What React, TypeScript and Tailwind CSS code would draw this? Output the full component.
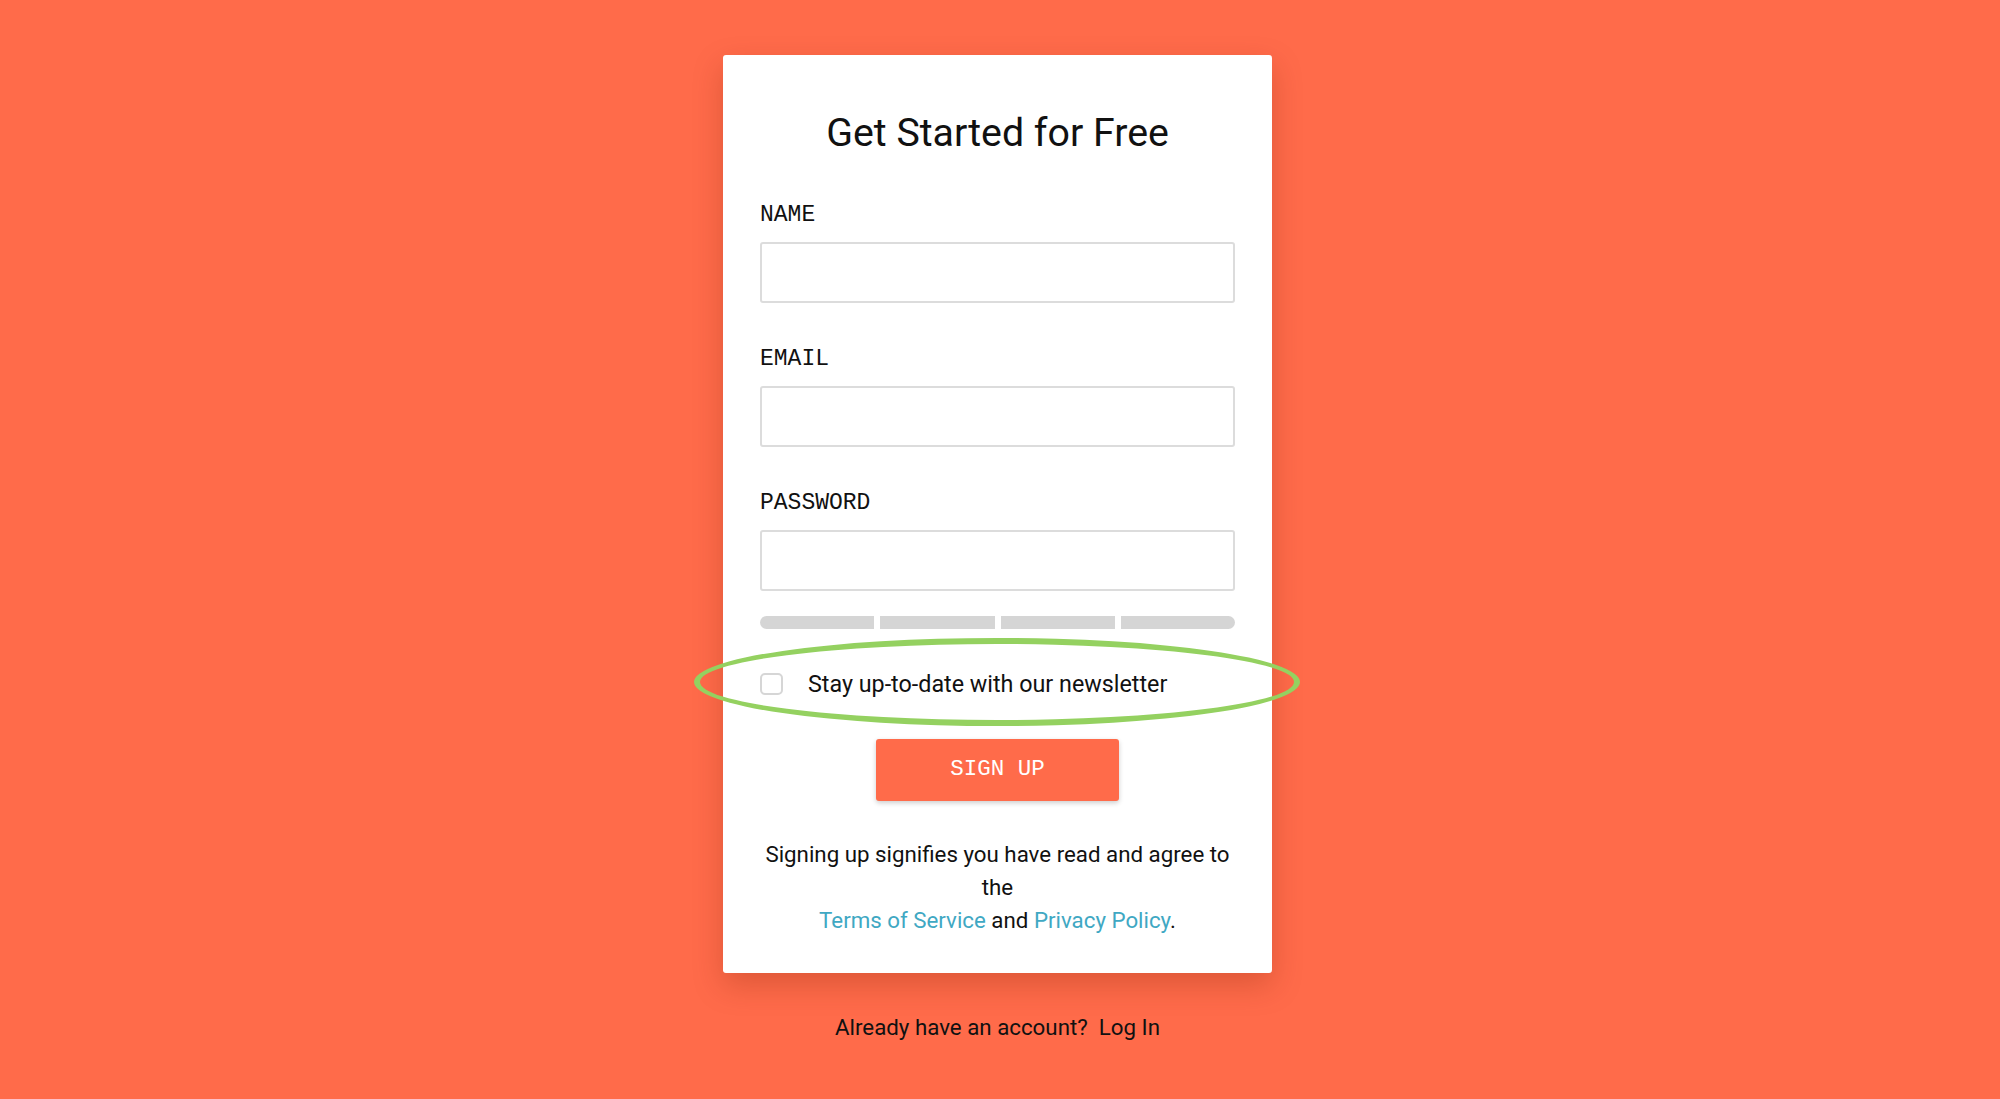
import React from "react";

const mono = { fontFamily: '"Liberation Mono", "DejaVu Sans Mono", monospace' };

function Field({ label, type, first }: { label: string; type: string; first?: boolean }) {
  return (
    <div className={first ? "" : "mt-[43px]"}>
      <label
        className="block text-[23px] leading-[26px] text-[#111] mb-[14px]"
        style={mono}
      >
        {label}
      </label>
      <input
        type={type}
        className="block w-full h-[61px] border-2 border-[#dcdcdc] rounded-[3px] bg-white outline-none px-3 text-[22px]"
      />
    </div>
  );
}

export default function App() {
  return (
    <div
      className="min-h-screen w-full bg-[#ff6b4a] flex flex-col items-center pt-[55px] pr-[5px] text-[#111]"
      style={{ fontFamily: 'Roboto, "Liberation Sans", sans-serif' }}
    >
      <div className="w-[549px] bg-white rounded-[3px] shadow-[0_12px_30px_rgba(120,30,0,0.25)] px-[37px] pt-[54px] pb-[36px]">
        <h1 className="text-center text-[39.3px] leading-[48px] font-normal mb-[45px]">
          Get Started for Free
        </h1>

        <Field label="NAME" type="text" first />
        <Field label="EMAIL" type="email" />
        <Field label="PASSWORD" type="password" />

        <div className="mt-[25px] h-[13px] flex gap-[6px] rounded-full overflow-hidden">
          <div className="flex-1 bg-[#d5d5d5]" />
          <div className="flex-1 bg-[#d5d5d5]" />
          <div className="flex-1 bg-[#d5d5d5]" />
          <div className="flex-1 bg-[#d5d5d5]" />
        </div>

        <div className="relative mt-[44px] h-[22px] flex items-center gap-[25px]">
          <span className="w-[23px] h-[22px] border-2 border-[#d6d6d6] rounded-[5px] bg-white shrink-0" />
          <span className="text-[23.3px] leading-[28px]">Stay up-to-date with our newsletter</span>
          <div className="absolute left-[-66px] top-[-35px] w-[606px] h-[88px] rounded-[50%] border-[6px] border-[#94d160] pointer-events-none" />
        </div>

        <div className="mt-[44px] flex justify-center">
          <button
            className="w-[243px] h-[62px] bg-[#ff6b4a] text-white rounded-[3px] shadow-[0_2px_5px_rgba(0,0,0,0.2)] text-[22.5px]"
            style={mono}
          >
            SIGN UP
          </button>
        </div>

        <p className="mt-[37px] text-center text-[22.3px] leading-[33px]">
          <span className="block">Signing up signifies you have read and agree to</span>
          <span className="block">the</span>
          <span className="block">
            <a className="text-[#3fa8c3]">Terms of Service</a> and{" "}
            <a className="text-[#3fa8c3]">Privacy Policy</a>.
          </span>
        </p>
      </div>

      <p className="mt-[38px] text-[22.3px] leading-[33px]">
        Already have an account?&nbsp; Log In
      </p>
    </div>
  );
}
